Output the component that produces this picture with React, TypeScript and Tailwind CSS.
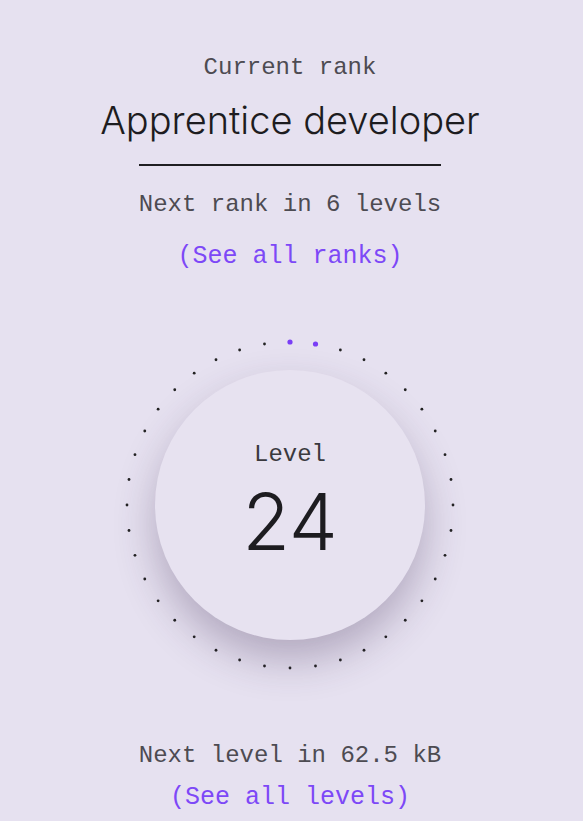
import React from 'react';

const DOTS = 40;
const ACTIVE = 2;

function DotRing() {
  const cx = 170;
  const cy = 170;
  const r = 163;
  return (
    <svg className="absolute inset-0" width={340} height={340} viewBox="0 0 340 340">
      {Array.from({ length: DOTS }).map((_, i) => {
        const a = (i * 2 * Math.PI) / DOTS;
        const x = cx + r * Math.sin(a);
        const y = cy - r * Math.cos(a);
        const on = i < ACTIVE;
        return <circle key={i} cx={x} cy={y} r={on ? 2.6 : 1.4} fill={on ? '#7a3ef6' : '#222'} />;
      })}
    </svg>
  );
}

export default function App() {
  const mono = "font-['Liberation_Mono',monospace]";
  return (
    <div className="min-h-screen w-full bg-[#e6e1f0] flex flex-col items-center pt-[52px] pr-[3px]">
      <p className={`${mono} text-[24px] leading-[32px] text-[#4d4b52]`}>Current rank</p>
      <h1 className="mt-[8px] font-['Inter',sans-serif] font-light text-[38px] leading-[56px] text-[#1d1c20]">
        Apprentice developer
      </h1>
      <div className="mt-[16px] h-[2px] w-[302px] bg-[#1f1e22]" />
      <p className={`mt-[23px] ${mono} text-[24px] leading-[32px] text-[#4d4b52]`}>Next rank in 6 levels</p>
      <a href="#" className={`mt-[20px] ${mono} text-[25px] leading-[32px] text-[#7d48f7]`}>
        (See all ranks)
      </a>

      <div className="relative mt-[62px] w-[340px] h-[340px] flex items-center justify-center">
        <DotRing />
        <div className="relative w-[270px] h-[270px] rounded-full bg-[#e7e2f0] shadow-[0_20px_40px_rgba(60,40,80,0.3)] flex flex-col items-center pt-[69px]">
          <span className={`${mono} text-[24px] leading-[32px] text-[#3a393e]`}>Level</span>
          <span className="mt-[21px] font-['Inter',sans-serif] font-light text-[78px] leading-[60px] text-[#1d1c20]">
            24
          </span>
        </div>
      </div>

      <p className={`mt-[65px] ${mono} text-[24px] leading-[32px] text-[#4d4b52]`}>Next level in 62.5 kB</p>
      <a href="#" className={`mt-[10px] ${mono} text-[25px] leading-[32px] text-[#7d48f7]`}>
        (See all levels)
      </a>
    </div>
  );
}
